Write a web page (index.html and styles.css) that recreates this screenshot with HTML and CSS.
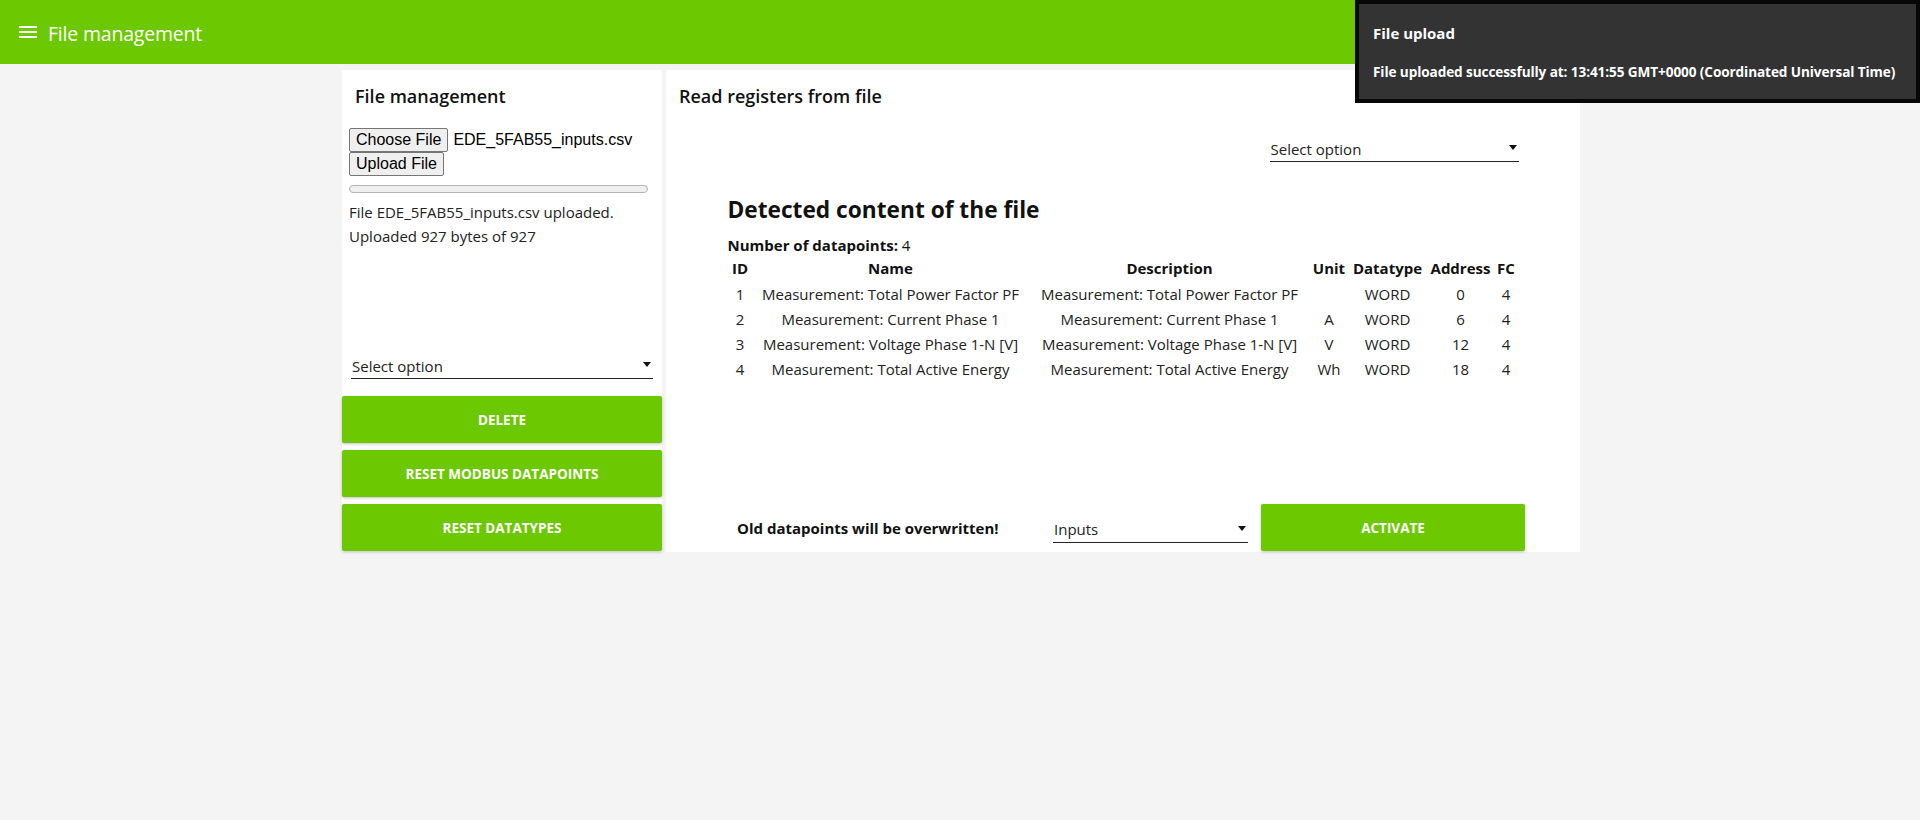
FILE: index.html
```html
<!DOCTYPE html>
<html lang="en">
<head>
<meta charset="utf-8">
<title>File management</title>
<link rel="stylesheet" href="styles.css">
</head>
<body>
<header class="topbar">
  <svg class="menu-icon" width="18" height="14" viewBox="0 0 18 14" aria-hidden="true">
    <rect x="0" y="0" width="18" height="2" fill="#fff"/>
    <rect x="0" y="5" width="18" height="2" fill="#fff"/>
    <rect x="0" y="10" width="18" height="2" fill="#fff"/>
  </svg>
  <span class="topbar-title">File management</span>
</header>

<main class="layout">
  <aside class="panel panel-left">
    <h2 class="panel-title">File management</h2>
    <div class="upload">
      <div class="file-row"><button class="native-btn">Choose File</button><span class="file-name">EDE_5FAB55_inputs.csv</span></div>
      <div class="file-row"><button class="native-btn">Upload File</button></div>
      <div class="progress"></div>
      <p class="status">File EDE_5FAB55_inputs.csv uploaded.<br>Uploaded 927 bytes of 927</p>
    </div>
    <div class="select select-left"><span>Select option</span><span class="caret"></span></div>
    <div class="actions">
      <button class="action-btn">DELETE</button>
      <button class="action-btn">RESET MODBUS DATAPOINTS</button>
      <button class="action-btn">RESET DATATYPES</button>
    </div>
  </aside>

  <section class="panel panel-right">
    <h2 class="panel-title">Read registers from file</h2>
    <div class="content">
      <div class="select select-right"><span>Select option</span><span class="caret"></span></div>
      <h1 class="detected">Detected content of the file</h1>
      <p class="count"><b>Number of datapoints:</b> 4</p>
      <table class="points">
        <colgroup>
          <col class="c-id"><col class="c-name"><col class="c-desc"><col class="c-unit"><col class="c-type"><col class="c-addr"><col class="c-fc">
        </colgroup>
        <thead>
          <tr><th>ID</th><th>Name</th><th>Description</th><th>Unit</th><th>Datatype</th><th>Address</th><th>FC</th></tr>
        </thead>
        <tbody>
          <tr><td>1</td><td>Measurement: Total Power Factor PF</td><td>Measurement: Total Power Factor PF</td><td></td><td>WORD</td><td>0</td><td>4</td></tr>
          <tr><td>2</td><td>Measurement: Current Phase 1</td><td>Measurement: Current Phase 1</td><td>A</td><td>WORD</td><td>6</td><td>4</td></tr>
          <tr><td>3</td><td>Measurement: Voltage Phase 1-N [V]</td><td>Measurement: Voltage Phase 1-N [V]</td><td>V</td><td>WORD</td><td>12</td><td>4</td></tr>
          <tr><td>4</td><td>Measurement: Total Active Energy</td><td>Measurement: Total Active Energy</td><td>Wh</td><td>WORD</td><td>18</td><td>4</td></tr>
        </tbody>
      </table>
    </div>
    <div class="activate-row">
      <span class="warning">Old datapoints will be overwritten!</span>
      <div class="select select-inputs"><span>Inputs</span><span class="caret"></span></div>
      <button class="action-btn activate-btn">ACTIVATE</button>
    </div>
  </section>
</main>

<div class="toast">
  <div class="toast-title">File upload</div>
  <div class="toast-msg">File uploaded successfully at: 13:41:55 GMT+0000 (Coordinated Universal Time)</div>
</div>
</body>
</html>
```

FILE: styles.css
```css
* { box-sizing: border-box; }

html, body {
  margin: 0;
  padding: 0;
}

body {
  background: #f4f4f4;
  font-family: "Open Sans", "Noto Sans", sans-serif;
  color: #1a1a1a;
  width: 1920px;
  height: 820px;
  overflow: hidden;
  position: relative;
}

.topbar {
  height: 64px;
  background: #6cc800;
  display: flex;
  align-items: center;
  padding-left: 19px;
  color: #fff;
}

.menu-icon { display: block; margin-top: 2px; }

.topbar-title {
  margin-left: 11px;
  font-size: 19.5px;
  font-weight: 400;
  letter-spacing: -0.2px;
  margin-top: 2px;
}

.layout {
  display: flex;
  justify-content: center;
  gap: 4px;
  margin-top: 6px;
  padding-left: 2px;
}

.panel {
  background: #fff;
  min-height: 482px;
  display: flex;
  flex-direction: column;
}

.panel-left { width: 320px; }
.panel-right { width: 914px; }

.panel-title {
  margin: 14px 0 0 13px;
  font-size: 18px;
  line-height: 24px;
  font-weight: 600;
  color: #111;
}

/* ---------- upload ---------- */
.upload { padding: 20px 0 0 7px; }

.file-row {
  display: flex;
  align-items: center;
  height: 24px;
}

.native-btn {
  font-family: "Liberation Sans", Arial, sans-serif;
  font-size: 16px;
  height: 23.5px;
  padding: 0 6px;
  background: #efefef;
  color: #000;
  border: 1px solid #767676;
  border-radius: 2px;
  line-height: 20px;
}

.file-name {
  font-family: "Liberation Sans", Arial, sans-serif;
  font-size: 16px;
  margin-left: 5px;
  color: #000;
}

.progress {
  margin-top: 9px;
  width: 299px;
  height: 8px;
  border: 1px solid #b5b5b5;
  border-radius: 4px;
  background: #efefef;
}

.status {
  margin: 7px 0 0;
  font-size: 15px;
  line-height: 24px;
  color: #222;
}

/* ---------- selects ---------- */
.select {
  display: flex;
  align-items: center;
  justify-content: space-between;
  border-bottom: 1px solid #222;
  font-size: 15px;
  color: #222;
  height: 26px;
  padding: 0 2px 0 1px;
}

.caret {
  width: 0;
  height: 0;
  border-left: 4px solid transparent;
  border-right: 4px solid transparent;
  border-top: 5px solid #111;
  margin-top: -2px;
}

.select-left {
  margin: auto 9px 17px 9px;
}

/* ---------- action buttons ---------- */
.actions {
  display: flex;
  flex-direction: column;
  gap: 7px;
  padding-bottom: 1px;
}

.action-btn {
  height: 47px;
  border: none;
  border-radius: 2px;
  background: #6cc800;
  color: #fff;
  font-family: "Open Sans", "Noto Sans", sans-serif;
  font-weight: 700;
  font-size: 13.5px;
  box-shadow: 0 1px 3px rgba(0,0,0,0.25);
}

/* ---------- right panel content ---------- */
.content {
  width: 791px;
  margin: 0 auto;
  display: flex;
  flex-direction: column;
}

.select-right {
  align-self: flex-end;
  width: 249px;
  margin-top: 28px;
}

.detected {
  margin: 33px 0 0;
  font-size: 22.7px;
  line-height: 30px;
  font-weight: 700;
  color: #111;
}

.count {
  margin: 10px 0 0;
  font-size: 15px;
  line-height: 20px;
  color: #111;
}

.count b { font-weight: 700; }

.points {
  border-collapse: collapse;
  table-layout: fixed;
  width: 791px;
  font-size: 15px;
  color: #222;
}

.c-id { width: 25px; }
.c-name { width: 276px; }
.c-desc { width: 282px; }
.c-unit { width: 37px; }
.c-type { width: 80px; }
.c-addr { width: 66px; }
.c-fc { width: 25px; }

.points th {
  height: 26px;
  padding: 0;
  font-weight: 700;
  color: #111;
  text-align: center;
  white-space: nowrap;
}

.points td {
  height: 25px;
  padding: 0;
  text-align: center;
  white-space: nowrap;
}

/* ---------- activate row ---------- */
.activate-row {
  margin-top: auto;
  display: flex;
  align-items: center;
  padding: 0 0 1px 71px;
}

.warning {
  width: 316px;
  font-size: 15px;
  font-weight: 700;
  color: #111;
}

.select-inputs {
  width: 195px;
  margin-top: 4px;
}

.activate-btn {
  width: 264px;
  margin-left: 13px;
}

/* ---------- toast ---------- */
.toast {
  position: absolute;
  top: 0;
  right: 0;
  width: 565px;
  height: 103px;
  background: #333;
  border: 4px solid rgba(0,0,0,0.85);
  color: #fff;
  padding: 18px 14px 0 14px;
}

.toast-title {
  font-size: 15px;
  font-weight: 700;
  line-height: 22px;
}

.toast-msg {
  margin-top: 19px;
  font-size: 13.6px;
  font-weight: 700;
  line-height: 18px;
  letter-spacing: -0.1px;
  white-space: nowrap;
}
```
